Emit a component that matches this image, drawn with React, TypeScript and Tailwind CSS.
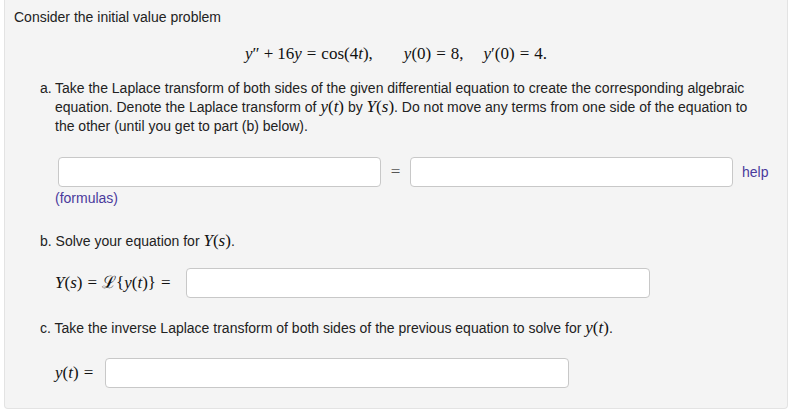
import React from "react";

const M = ({ children }: { children: React.ReactNode }) => (
  <span className="italic">{children}</span>
);
const Eq = () => <span className="mx-[5px] not-italic">=</span>;
const Plus = () => <span className="mx-[4px] not-italic">+</span>;

export default function App() {
  const math = "font-['Liberation_Serif',serif] text-[17px] leading-[14px] text-[#111]";
  const box = "h-[30px] bg-white border border-[#c8c8c8] rounded-[4px]";
  return (
    <div className="w-[790px] h-[413px] bg-white overflow-hidden font-['Liberation_Sans',Arial,sans-serif] text-[14px] text-[#222]">
      <div className="ml-[4px] w-[784px] h-[409px] bg-[#f4f4f4] border-x border-b border-[#e3e3e3] rounded-b-[4px] pt-[8px] pl-[9px]">
        <div className="leading-[19px]">Consider the initial value problem</div>

        <div className={`${math} mt-[16px] h-[22px] flex items-center justify-center pr-[9px] whitespace-pre`}>
          <span><M>y</M>″<Plus />16<M>y</M><Eq />cos(4<M>t</M>),</span>
          <span className="ml-[31px]"><M>y</M>(0)<Eq />8,</span>
          <span className="ml-[20px]"><M>y</M>′(0)<Eq />4.</span>
        </div>

        <div className="mt-[14px] flex leading-[19px] pl-[26px] pr-[27px]">
          <span className="w-[15px] shrink-0">a.</span>
          <span>
            Take the Laplace transform of both sides of the given differential equation to create the corresponding algebraic equation. Denote the Laplace transform of{" "}
            <span className={math}><M>y</M>(<M>t</M>)</span> by{" "}
            <span className={math}><M>Y</M>(<M>s</M>)</span>. Do not move any terms from one side of the equation to the other (until you get to part (b) below).
          </span>
        </div>

        <div className="mt-[21px] flex items-center pl-[44px] h-[30px]">
          <div className={`w-[323px] ${box}`} />
          <span className={`${math} w-[29px] text-center text-[#555]`}>=</span>
          <div className={`w-[323px] ${box}`} />
          <span className="ml-[9px] text-[#4a3a9c]">help</span>
        </div>
        <div className="mt-[2px] pl-[41px] leading-[19px] text-[#4a3a9c]">(formulas)</div>

        <div className="mt-[24px] pl-[26px] leading-[19px]">
          b. Solve your equation for <span className={math}><M>Y</M>(<M>s</M>)</span>.
        </div>

        <div className="mt-[17px] flex items-center pl-[41px] h-[30px]">
          <span className={`${math} whitespace-pre`}><M>Y</M>(<M>s</M>)<Eq />ℒ{"{"}<M>y</M>(<M>t</M>){"}"}<Eq /></span>
          <div className={`ml-[10px] w-[464px] ${box}`} />
        </div>

        <div className="mt-[21px] pl-[26px] leading-[19px]">
          c. Take the inverse Laplace transform of both sides of the previous equation to solve for{" "}
          <span className={math}><M>y</M>(<M>t</M>)</span>.
        </div>

        <div className="mt-[20px] flex items-center pl-[41px] h-[30px]">
          <span className={`${math} whitespace-pre`}><M>y</M>(<M>t</M>)<Eq /></span>
          <div className={`ml-[7px] w-[464px] ${box}`} />
        </div>
      </div>
    </div>
  );
}
